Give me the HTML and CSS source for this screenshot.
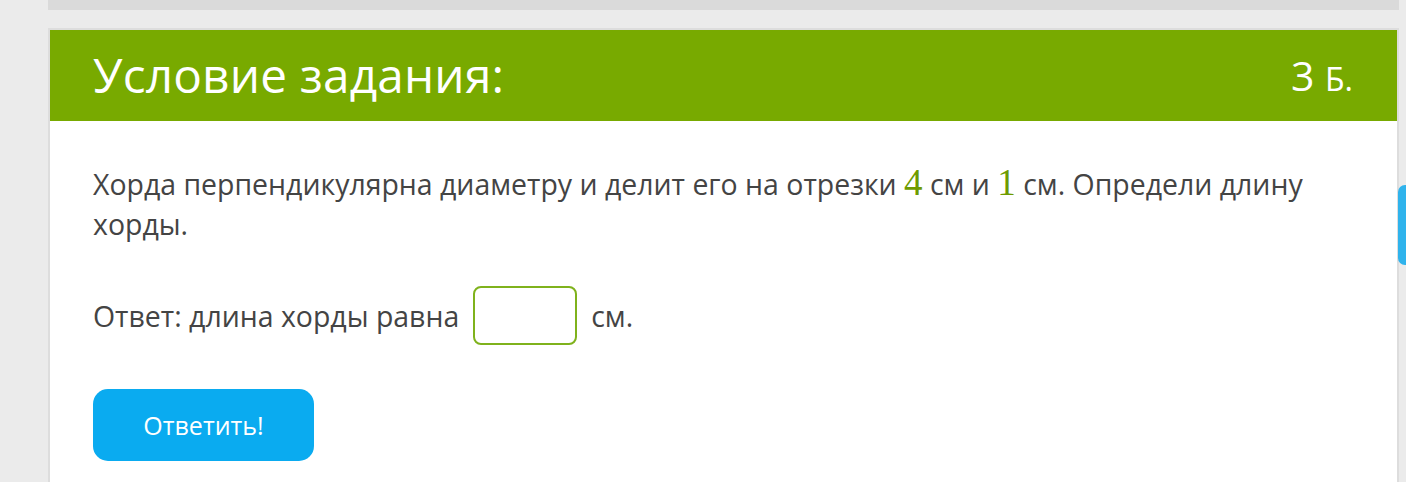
FILE: index.html
```html
<!DOCTYPE html>
<html lang="ru">
  <head>
    <meta charset="UTF-8" />
    <meta name="viewport" content="width=device-width, initial-scale=1.0" />
    <title>Условие задания</title>
    <link rel="stylesheet" href="styles.css">
  </head>
  <body>
    <div class="page">
      <div class="prev_card"></div>

      <div class="task">
        <div class="task_head">
          <h1>Условие задания:</h1>
          <span class="points">3 <small>Б.</small></span>
        </div>

        <div class="task_body">
          <p class="question">
            Хорда перпендикулярна диаметру и делит его на отрезки
            <span class="num">4</span> см и <span class="num">1</span> см.
            Определи длину хорды.
          </p>

          <div class="answer">
            <span>Ответ: длина хорды равна</span>
            <input type="text" class="answer_input" />
            <span>см.</span>
          </div>

          <button class="submit">Ответить!</button>
        </div>
      </div>

      <div class="side_tab"></div>
    </div>
  </body>
</html>
```

FILE: styles.css
```css
* {
  margin: 0;
  padding: 0;
  box-sizing: border-box;
}

body {
  background: #ebebeb;
  font-family: "Open Sans", "Liberation Sans", sans-serif;
  overflow: hidden;
}

.page {
  position: relative;
  height: 100vh;
  padding: 0 8px 0 48px;

  .prev_card {
    width: 1351px;
    height: 10px;
    background: #dadada;
    margin-bottom: 18px;
  }

  .task {
    width: 1351px;
    background: white;
    border: 2px solid #dddddd;
    border-bottom: none;
    min-height: 460px;

    .task_head {
      background: #78aa00;
      height: 91px;
      display: flex;
      align-items: center;
      justify-content: space-between;
      padding: 0 44px 2px 43px;
      color: white;

      > h1 {
        font-weight: 400;
        font-size: 47.7px;
        letter-spacing: 0.2px;
      }

      .points {
        font-size: 41px;

        > small {
          font-size: 32px;
        }
      }
    }

    .task_body {
      padding: 42px 43px 0 43px;
      color: #444444;

      .question {
        font-size: 28.45px;
        line-height: 40px;
        width: 1230px;

        .num {
          font-family: "Liberation Serif", "DejaVu Serif", serif;
          font-size: 37px;
          color: #6e9b00;
        }
      }

      .answer {
        display: flex;
        align-items: center;
        gap: 14px;
        font-size: 28.45px;
        margin-top: 42px;

        .answer_input {
          width: 104px;
          height: 59px;
          border: 2px solid #7fb21c;
          border-radius: 8px;
          background: white;
          outline: none;
        }
      }

      .submit {
        margin-top: 44px;
        width: 221px;
        height: 72px;
        border: none;
        border-radius: 15px;
        background: #0aabf0;
        color: white;
        font-family: "Open Sans", "Liberation Sans", sans-serif;
        font-size: 25px;
        cursor: pointer;
      }
    }
  }

  /* край соседней панели справа */
  .side_tab {
    position: absolute;
    right: -6px;
    top: 185px;
    width: 14px;
    height: 80px;
    background: #2fb3ec;
    border-radius: 8px;
  }
}
```
